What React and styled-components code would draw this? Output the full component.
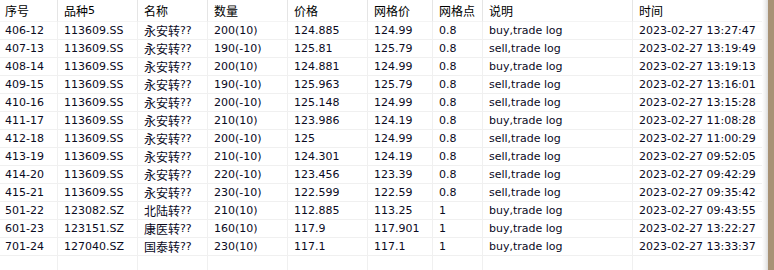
import React from "react";
import styled, { createGlobalStyle } from "styled-components";

const GlobalStyle = createGlobalStyle`
  html, body {
    margin: 0;
    padding: 0;
    background: #ffffff;
  }
  body {
    font-family: "DejaVu Sans", "Noto Sans CJK SC", sans-serif;
    font-size: 11px;
    color: #000;
  }
`;

const columns = [
  { key: "id", title: "序号", width: "58px" },
  { key: "code", title: "品种5", width: "80px" },
  { key: "name", title: "名称", width: "70px" },
  { key: "qty", title: "数量", width: "80px" },
  { key: "price", title: "价格", width: "80px" },
  { key: "grid", title: "网格价", width: "65px" },
  { key: "step", title: "网格点", width: "50px" },
  { key: "note", title: "说明", width: "150px" },
  { key: "time", title: "时间", width: "1fr" },
];

const rows = [
  ["406-12", "113609.SS", "永安转??", "200(10)", "124.885", "124.99", "0.8", "buy,trade log", "2023-02-27 13:27:47"],
  ["407-13", "113609.SS", "永安转??", "190(-10)", "125.81", "125.79", "0.8", "sell,trade log", "2023-02-27 13:19:49"],
  ["408-14", "113609.SS", "永安转??", "200(10)", "124.881", "124.99", "0.8", "buy,trade log", "2023-02-27 13:19:13"],
  ["409-15", "113609.SS", "永安转??", "190(-10)", "125.963", "125.79", "0.8", "sell,trade log", "2023-02-27 13:16:01"],
  ["410-16", "113609.SS", "永安转??", "200(-10)", "125.148", "124.99", "0.8", "sell,trade log", "2023-02-27 13:15:28"],
  ["411-17", "113609.SS", "永安转??", "210(10)", "123.986", "124.19", "0.8", "buy,trade log", "2023-02-27 11:08:28"],
  ["412-18", "113609.SS", "永安转??", "200(-10)", "125", "124.99", "0.8", "sell,trade log", "2023-02-27 11:00:29"],
  ["413-19", "113609.SS", "永安转??", "210(-10)", "124.301", "124.19", "0.8", "sell,trade log", "2023-02-27 09:52:05"],
  ["414-20", "113609.SS", "永安转??", "220(-10)", "123.456", "123.39", "0.8", "sell,trade log", "2023-02-27 09:42:29"],
  ["415-21", "113609.SS", "永安转??", "230(-10)", "122.599", "122.59", "0.8", "sell,trade log", "2023-02-27 09:35:42"],
  ["501-22", "123082.SZ", "北陆转??", "210(10)", "112.885", "113.25", "1", "buy,trade log", "2023-02-27 09:43:55"],
  ["601-23", "123151.SZ", "康医转??", "160(10)", "117.9", "117.901", "1", "buy,trade log", "2023-02-27 13:22:27"],
  ["701-24", "127040.SZ", "国泰转??", "230(10)", "117.1", "117.1", "1", "buy,trade log", "2023-02-27 13:33:37"],
];

// wrap CJK runs so they render at 12px like the original
const withCjk = (text) =>
  text.split(/([\u4e00-\u9fff]+)/).map((part, i) =>
    /[\u4e00-\u9fff]/.test(part) ? <Cjk key={i}>{part}</Cjk> : part
  );

const Window = styled.div`
  display: flex;
  width: 774px;
  height: 270px;
  overflow: hidden;
`;

const Table = styled.div`
  flex: 1;
  display: grid;
  grid-template-columns: ${(p) => p.$template};
  grid-auto-rows: 18px;
  grid-template-rows: 22px;
  align-content: start;
`;

const Cell = styled.div`
  display: flex;
  align-items: center;
  padding-left: ${(p) => (p.$first ? "5px" : "6px")};
  border-right: 1px solid ${(p) => (p.$head ? "#e5e5e5" : "#f0f0f0")};
  border-bottom: 1px solid ${(p) => (p.$head ? "#f4f4f4" : "#f0f0f0")};
  white-space: nowrap;
  overflow: hidden;
  line-height: 1;
  color: ${(p) => (p.$head ? "#000" : "#0a0a1e")};
  &:nth-child(9n) {
    border-right: none;
  }
`;

const Cjk = styled.span`
  font-family: "Noto Sans CJK SC", sans-serif;
  font-size: 12px;
`;

const Edge = styled.div`
  width: 12px;
  display: flex;
`;

const Shadow = styled.div`
  width: 6px;
  background: linear-gradient(to right, #ffffff, #f2f2f2 50%, #dcdcdc);
`;

const Frame = styled.div`
  width: 6px;
  background: #a89275;
`;

export default function App() {
  const template = columns.map((c) => c.width).join(" ");
  return (
    <>
      <GlobalStyle />
      <Window>
        <Table $template={template}>
          {columns.map((c, i) => (
            <Cell key={c.key} $head $first={i === 0}>
              {withCjk(c.title)}
            </Cell>
          ))}
          {rows.map((r, ri) =>
            r.map((v, ci) => (
              <Cell key={ri + "-" + ci} $first={ci === 0}>
                {withCjk(v)}
              </Cell>
            ))
          )}
          {columns.map((c, i) => (
            <Cell key={"empty-" + c.key} $first={i === 0} />
          ))}
        </Table>
        <Edge>
          <Shadow />
          <Frame />
        </Edge>
      </Window>
    </>
  );
}
